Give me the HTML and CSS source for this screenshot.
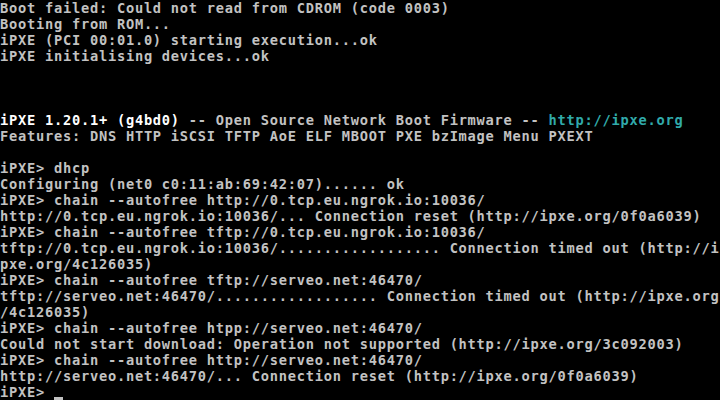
FILE: index.html
```html
<!DOCTYPE html>
<html>
<head>
<meta charset="utf-8">
<link rel="stylesheet" href="styles.css">
</head>
<body>
<div class="console">
<div class="line">Boot failed: Could not read from CDROM (code 0003)</div>
<div class="line">Booting from ROM...</div>
<div class="line">iPXE (PCI 00:01.0) starting execution...ok</div>
<div class="line">iPXE initialising devices...ok</div>
<div class="line"></div>
<div class="line"></div>
<div class="line"></div>
<div class="line"><span class="bright">iPXE 1.20.1+ (g4bd0)</span> -- Open Source Network Boot Firmware -- <span class="link">http://ipxe.org</span></div>
<div class="line">Features: DNS HTTP iSCSI TFTP AoE ELF MBOOT PXE bzImage Menu PXEXT</div>
<div class="line"></div>
<div class="line">iPXE&gt; dhcp</div>
<div class="line">Configuring (net0 c0:11:ab:69:42:07)...... ok</div>
<div class="line">iPXE&gt; chain --autofree http://0.tcp.eu.ngrok.io:10036/</div>
<div class="line">http://0.tcp.eu.ngrok.io:10036/... Connection reset (http://ipxe.org/0f0a6039)</div>
<div class="line">iPXE&gt; chain --autofree tftp://0.tcp.eu.ngrok.io:10036/</div>
<div class="line">tftp://0.tcp.eu.ngrok.io:10036/.................. Connection timed out (http://i</div>
<div class="line">pxe.org/4c126035)</div>
<div class="line">iPXE&gt; chain --autofree tftp://serveo.net:46470/</div>
<div class="line">tftp://serveo.net:46470/.................. Connection timed out (http://ipxe.org</div>
<div class="line">/4c126035)</div>
<div class="line">iPXE&gt; chain --autofree htpp://serveo.net:46470/</div>
<div class="line">Could not start download: Operation not supported (http://ipxe.org/3c092003)</div>
<div class="line">iPXE&gt; chain --autofree http://serveo.net:46470/</div>
<div class="line">http://serveo.net:46470/... Connection reset (http://ipxe.org/0f0a6039)</div>
<div class="line">iPXE&gt; <span class="cursor"></span></div>
</div>
</body>
</html>
```

FILE: styles.css
```css
html, body {
  margin: 0;
  padding: 0;
  background: #000000;
  width: 720px;
  height: 400px;
  overflow: hidden;
}

.console {
  display: flex;
  flex-direction: column;
  font-family: "DejaVu Sans Mono", "Liberation Mono", monospace;
  font-size: 13.7px;
  letter-spacing: 0.752px;
  font-weight: bold;
  line-height: 16px;
  color: #c2c2c2;
}

.line {
  height: 16px;
  white-space: pre;
}

.bright {
  color: #ffffff;
}

.link {
  color: #30aaaa;
}

.cursor {
  display: inline-block;
  width: 9px;
  height: 16px;
  vertical-align: top;
  background: linear-gradient(to bottom, transparent 13px, #c2c2c2 13px, #c2c2c2 16px);
}
```
